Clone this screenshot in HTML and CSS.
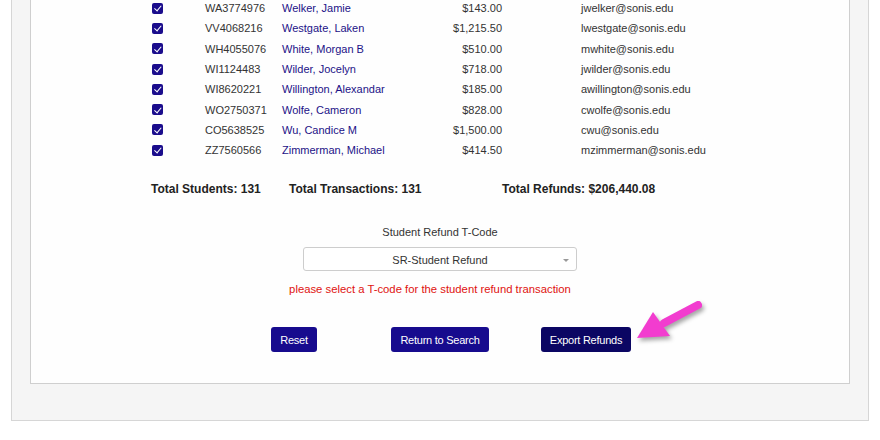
FILE: index.html
```html
<!DOCTYPE html>
<html>
<head>
<meta charset="utf-8">
<link rel="stylesheet" href="styles.css">
</head>
<body>
<div class="outer">
  <div class="inner">
    <div class="table">
      <div class="row"><span class="cb"></span><span class="id">WA3774976</span><span class="name">Welker, Jamie</span><span class="amt">$143.00</span><span class="email">jwelker@sonis.edu</span></div>
      <div class="row"><span class="cb"></span><span class="id">VV4068216</span><span class="name">Westgate, Laken</span><span class="amt">$1,215.50</span><span class="email">lwestgate@sonis.edu</span></div>
      <div class="row"><span class="cb"></span><span class="id">WH4055076</span><span class="name">White, Morgan B</span><span class="amt">$510.00</span><span class="email">mwhite@sonis.edu</span></div>
      <div class="row"><span class="cb"></span><span class="id">WI1124483</span><span class="name">Wilder, Jocelyn</span><span class="amt">$718.00</span><span class="email">jwilder@sonis.edu</span></div>
      <div class="row"><span class="cb"></span><span class="id">WI8620221</span><span class="name">Willington, Alexandar</span><span class="amt">$185.00</span><span class="email">awillington@sonis.edu</span></div>
      <div class="row"><span class="cb"></span><span class="id">WO2750371</span><span class="name">Wolfe, Cameron</span><span class="amt">$828.00</span><span class="email">cwolfe@sonis.edu</span></div>
      <div class="row"><span class="cb"></span><span class="id">CO5638525</span><span class="name">Wu, Candice M</span><span class="amt">$1,500.00</span><span class="email">cwu@sonis.edu</span></div>
      <div class="row"><span class="cb"></span><span class="id">ZZ7560566</span><span class="name">Zimmerman, Michael</span><span class="amt">$414.50</span><span class="email">mzimmerman@sonis.edu</span></div>
    </div>
    <div class="totals">
      <span>Total Students: 131</span>
      <span>Total Transactions: 131</span>
      <span>Total Refunds: $206,440.08</span>
    </div>
    <div class="tcode">
      <div class="label">Student Refund T-Code</div>
      <div class="select"><span>SR-Student Refund</span><i class="caret"></i></div>
      <div class="error">please select a T-code for the student refund transaction</div>
    </div>
    <div class="buttons">
      <div class="cell"><button class="btn">Reset</button></div>
      <div class="cell"><button class="btn">Return to Search</button></div>
      <div class="cell"><button class="btn dark">Export Refunds</button></div>
    </div>
  </div>
</div>
<svg class="pointer" width="100" height="70" viewBox="0 0 100 70">
  <line x1="78" y1="15" x2="44" y2="33" stroke="#f23ccf" stroke-width="8" stroke-linecap="round"/>
  <polygon points="17,48 33,22 50,46" fill="#f23ccf"/>
</svg>
</body>
</html>
```
FILE: styles.css
```css
html, body {
  margin: 0;
  padding: 0;
  background: #ffffff;
}
body {
  width: 880px;
  height: 440px;
  overflow: hidden;
  font-family: "Liberation Sans", Arial, sans-serif;
  font-size: 11px;
  color: #333;
  position: relative;
}
.outer {
  margin-left: 11px;
  width: 820px;
  background: #f5f5f5;
  border: 1px solid #d6d6d6;
  border-top: none;
  padding: 0 18px 36px 18px;
}
.inner {
  background: #fefefe;
  border: 1px solid #cfcfcf;
  border-top: none;
  padding-bottom: 31px;
}
.table {
  margin-top: -2px;
  padding-left: 121px;
}
.row {
  display: grid;
  grid-template-columns: 53px 77px 140px 80px 79px auto;
  grid-template-areas: "cb id name amt gap email";
  align-items: center;
  height: 20.3px;
}
.cb {
  grid-area: cb;
  width: 11px;
  height: 11px;
  border-radius: 2px;
  background: #1a0c8c;
  position: relative;
}
.cb::after {
  content: "";
  position: absolute;
  left: 3.5px;
  top: 1.5px;
  width: 3px;
  height: 5.5px;
  border: solid #fff;
  border-width: 0 1.6px 1.6px 0;
  transform: rotate(40deg);
}
.id { grid-area: id; color: #333; }
.name { grid-area: name; color: #1c1287; }
.amt { grid-area: amt; text-align: right; color: #333; }
.email { grid-area: email; color: #333; }
.totals {
  display: grid;
  grid-template-columns: 138px 213px auto;
  padding-left: 120px;
  margin-top: 22px;
  font-size: 12px;
  font-weight: bold;
  color: #222;
  line-height: 14px;
}
.tcode {
  display: flex;
  flex-direction: column;
  align-items: center;
  margin-top: 29px;
}
.label {
  line-height: 14px;
  color: #333;
}
.select {
  margin-top: 8px;
  width: 272px;
  height: 21px;
  padding-top: 1px;
  border: 1px solid #cdcdcd;
  border-radius: 3px;
  background: #fff;
  display: flex;
  align-items: center;
  justify-content: center;
  position: relative;
  color: #333;
}
.caret {
  position: absolute;
  right: 7px;
  top: 11px;
  width: 0;
  height: 0;
  border-left: 3px solid transparent;
  border-right: 3px solid transparent;
  border-top: 3px solid #999;
}
.error {
  margin-top: 11px;
  margin-right: 20px;
  line-height: 14px;
  font-size: 11.3px;
  color: #e0120f;
}
.buttons {
  display: grid;
  grid-template-columns: repeat(3, 146px);
  justify-content: center;
  margin-top: 31px;
}
.cell {
  display: flex;
  justify-content: center;
}
.btn {
  height: 25px;
  padding: 0 9px;
  border: none;
  border-radius: 3px;
  background: #170b8e;
  color: #fff;
  font-family: "Liberation Sans", Arial, sans-serif;
  font-size: 11px;
  letter-spacing: -0.25px;
}
.btn.dark {
  background: #0b0663;
}
.pointer {
  position: absolute;
  left: 620px;
  top: 290px;
  filter: drop-shadow(2px 3px 2px rgba(0,0,0,0.35));
}
```
